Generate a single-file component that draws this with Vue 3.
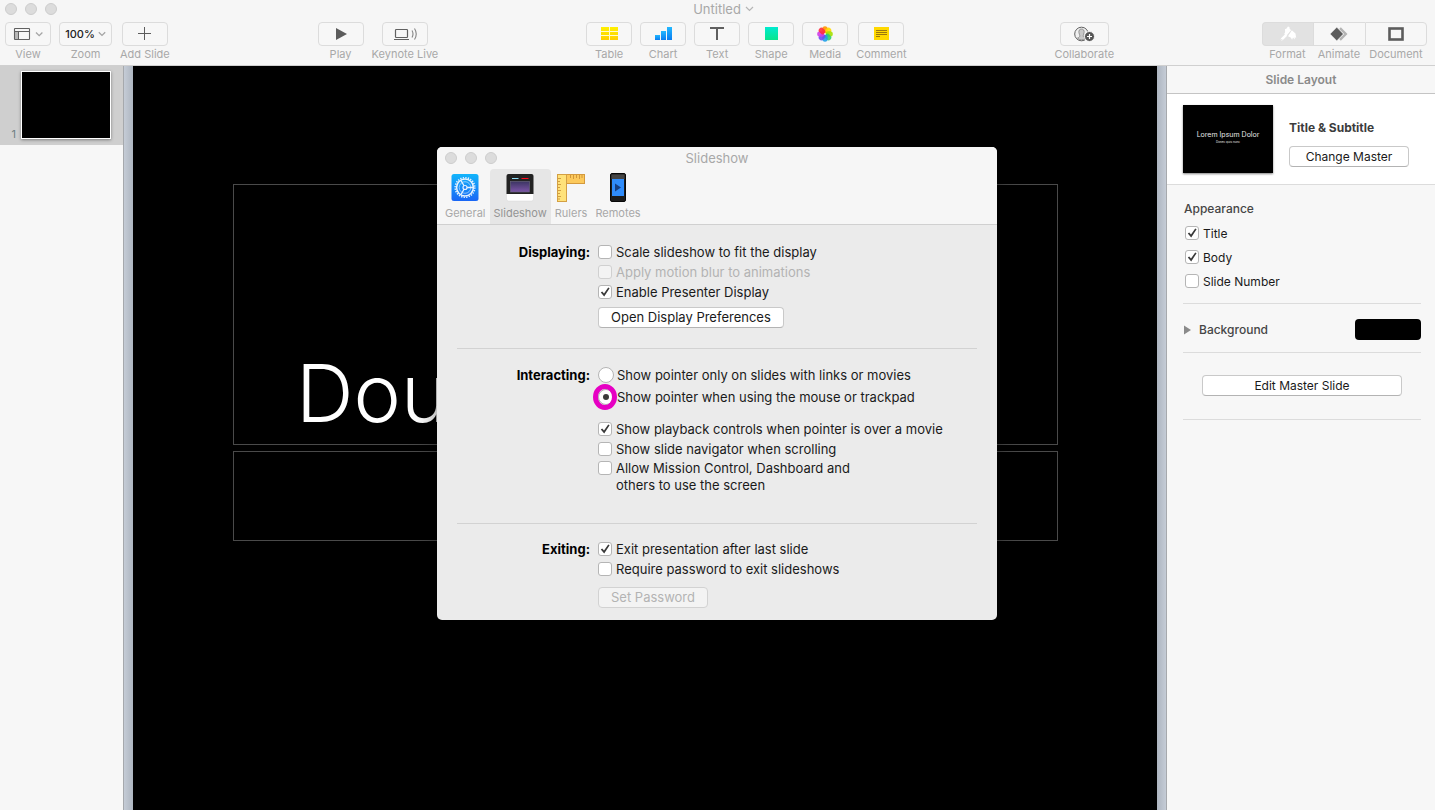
<script setup>
import { ref, reactive } from 'vue';

const activeTab = ref('slideshow');
const activePanel = ref('format');
const pointerMode = ref('mouse');

const insertTools = [
    { id: 'table', label: 'Table' },
    { id: 'chart', label: 'Chart' },
    { id: 'text', label: 'Text' },
    { id: 'shape', label: 'Shape' },
    { id: 'media', label: 'Media' },
    { id: 'comment', label: 'Comment' }
];

const petals = [
    { angle: 0, color: '#ff9500' },
    { angle: 45, color: '#ffd900' },
    { angle: 90, color: '#a5e000' },
    { angle: 135, color: '#2fcf6f' },
    { angle: 180, color: '#1f9fe8' },
    { angle: 225, color: '#6a4cf0' },
    { angle: 270, color: '#d03be8' },
    { angle: 315, color: '#ff2d3f' }
];

const panels = [
    { id: 'format', label: 'Format' },
    { id: 'animate', label: 'Animate' },
    { id: 'document', label: 'Document' }
];

const tabs = [
    { id: 'general', label: 'General' },
    { id: 'slideshow', label: 'Slideshow' },
    { id: 'rulers', label: 'Rulers' },
    { id: 'remotes', label: 'Remotes' }
];

const displaying = reactive([
    { label: 'Scale slideshow to fit the display', checked: false },
    { label: 'Apply motion blur to animations', checked: false, disabled: true },
    { label: 'Enable Presenter Display', checked: true }
]);

const pointerOptions = [
    { value: 'links', label: 'Show pointer only on slides with links or movies' },
    { value: 'mouse', label: 'Show pointer when using the mouse or trackpad', highlight: true }
];

const interacting = reactive([
    { label: 'Show playback controls when pointer is over a movie', checked: true },
    { label: 'Show slide navigator when scrolling', checked: false },
    { label: 'Allow Mission Control, Dashboard and others to use the screen', checked: false, wrap: true }
]);

const exiting = reactive([
    { label: 'Exit presentation after last slide', checked: true },
    { label: 'Require password to exit slideshows', checked: false }
]);

const appearance = reactive([
    { label: 'Title', checked: true },
    { label: 'Body', checked: true },
    { label: 'Slide Number', checked: false }
]);
</script>

<template>
    <div class="app">
        <header class="toolbar">
            <div class="titlebar document-title">
                <div class="lights"><span></span><span></span><span></span></div>
                <span>Untitled</span>
                <svg width="9" height="6" viewBox="0 0 9 6"><path d="M1 1l3.500 3.500 3.500-3.500" fill="none" stroke="#b5b5b5" stroke-width="1.200" /></svg>
            </div>
            <nav class="tools">
                <div class="group">
                    <div class="tool">
                        <button class="tool-btn" aria-label="View">
                            <svg width="30" height="14" viewBox="0 0 30 14">
                                <path d="M2 5h3v7h-3z" fill="#b9b9b9" />
                                <rect x="1.500" y="1.500" width="15" height="11" rx="0.500" fill="none" stroke="#616161" stroke-width="1.100" />
                                <path d="M2 4.500h14M5.500 5v7" fill="none" stroke="#616161" />
                                <path d="M23 5.500l3.200 3.200 3.200-3.200" fill="none" stroke="#a5a5a5" stroke-width="1.300" />
                            </svg>
                        </button>
                        <span>View</span>
                    </div>
                    <div class="tool">
                        <button class="tool-btn zoom" aria-label="Zoom">
                            100%
                            <svg width="8" height="6" viewBox="0 0 8 6"><path d="M0.800 1.200l3.200 3.200 3.200-3.200" fill="none" stroke="#a5a5a5" stroke-width="1.300" /></svg>
                        </button>
                        <span>Zoom</span>
                    </div>
                    <div class="tool">
                        <button class="tool-btn" aria-label="Add Slide">
                            <svg width="14" height="14" viewBox="0 0 14 14"><path d="M6.500 0v13M0 6.500h13" stroke="#5c5c5c" fill="none" /></svg>
                        </button>
                        <span>Add Slide</span>
                    </div>
                </div>

                <div class="group">
                    <div class="tool">
                        <button class="tool-btn" aria-label="Play">
                            <svg width="12" height="12" viewBox="0 0 12 12"><path d="M1 0l11 6-11 6z" fill="#5c5c5c" /></svg>
                        </button>
                        <span>Play</span>
                    </div>
                    <div class="tool">
                        <button class="tool-btn" aria-label="Keynote Live">
                            <svg width="24" height="14" viewBox="0 0 24 14">
                                <rect x="2.500" y="2.500" width="12" height="8" rx="0.800" fill="none" stroke="#616161" stroke-width="1.200" />
                                <path d="M1 12.500h15" stroke="#616161" fill="none" />
                                <path d="M19 3.500q2 3.500 0 7M21.500 1.500q3.500 5.500 0 11" fill="none" stroke="#858585" stroke-width="1.100" />
                            </svg>
                        </button>
                        <span>Keynote Live</span>
                    </div>
                </div>

                <div class="group">
                    <div v-for="tool in insertTools" :key="tool.id" class="tool">
                        <button class="tool-btn" :aria-label="tool.label">
                            <svg v-if="tool.id === 'table'" width="18" height="14" viewBox="0 0 18 14">
                                <defs><linearGradient id="yellow" x2="0" y2="1"><stop stop-color="#fff000" /><stop offset="1" stop-color="#ffcf00" /></linearGradient></defs>
                                <rect x="1" width="17" height="13" fill="url(#yellow)" />
                                <path d="M1 4.500h17M1 8.500h17M9.500 0v13" stroke="#fffbd0" fill="none" />
                            </svg>
                            <svg v-else-if="tool.id === 'chart'" width="18" height="14" viewBox="0 0 18 14">
                                <defs><linearGradient id="blue" x2="0" y2="1"><stop stop-color="#22b8ff" /><stop offset="1" stop-color="#0a7cf0" /></linearGradient></defs>
                                <rect x="1" y="8" width="5" height="5" fill="url(#blue)" />
                                <rect x="7" y="4" width="5" height="9" fill="url(#blue)" />
                                <rect x="13" width="5" height="13" fill="url(#blue)" />
                            </svg>
                            <svg v-else-if="tool.id === 'text'" width="14" height="14" viewBox="0 0 14 14">
                                <path d="M0 1h14M7 1v12" stroke="#5f5f5f" stroke-width="2" fill="none" />
                            </svg>
                            <svg v-else-if="tool.id === 'shape'" width="14" height="14" viewBox="0 0 14 14">
                                <defs><linearGradient id="green" x2="0" y2="1"><stop stop-color="#00ead0" /><stop offset="1" stop-color="#08e58c" /></linearGradient></defs>
                                <rect x="1" width="13" height="13" fill="url(#green)" />
                            </svg>
                            <svg v-else-if="tool.id === 'media'" width="16" height="16" viewBox="0 0 16 16">
                                <rect
                                    v-for="petal in petals"
                                    :key="petal.angle"
                                    x="5.300"
                                    y="0.200"
                                    width="5.400"
                                    height="7.200"
                                    rx="2.700"
                                    :fill="petal.color"
                                    fill-opacity="0.900"
                                    :transform="`rotate(${petal.angle} 8 8)`"
                                />
                                <circle cx="8" cy="8" r="0.800" fill="#fff" />
                            </svg>
                            <svg v-else width="16" height="14" viewBox="0 0 16 14">
                                <rect x="1" width="15" height="13" fill="#ffd800" />
                                <path d="M3 3.500h11M3 5.500h11M3 7.500h11M3 9.500h4" stroke="#8f6c10" stroke-width="0.900" fill="none" />
                            </svg>
                        </button>
                        <span>{{ tool.label }}</span>
                    </div>
                </div>

                <div class="group">
                    <div class="tool">
                        <button class="tool-btn wide" aria-label="Collaborate">
                            <svg width="21" height="16" viewBox="0 0 21 16">
                                <circle cx="7.500" cy="8" r="6.800" fill="#f0f0f0" stroke="#616161" />
                                <path d="M7.500 3c-2.200 0-2.900 1.700-2.600 3.600.1 1.300.9 2 .9 3.200 0 1.300-1 1.700-2.300 2.300q4 3.700 8 0c-1.300-.6-2.300-1-2.300-2.300 0-1.200.8-1.900.9-3.200.3-1.900-.4-3.600-2.600-3.600z" fill="#c9c9c9" stroke="#777" stroke-width="0.700" />
                                <circle cx="15.500" cy="10.500" r="5" fill="#555" stroke="#f7f7f7" />
                                <path d="M15.500 8v5M13 10.500h5" stroke="#fff" stroke-width="1.200" fill="none" />
                            </svg>
                        </button>
                        <span>Collaborate</span>
                    </div>
                </div>

                <div class="segments">
                    <div v-for="panel in panels" :key="panel.id" class="tool segment">
                        <button
                            class="tool-btn"
                            :class="{ active: activePanel === panel.id }"
                            :aria-label="panel.label"
                            @click="activePanel = panel.id"
                        >
                            <svg v-if="panel.id === 'format'" width="18" height="16" viewBox="0 0 18 16">
                                <path d="M6 3.200l1.600-.6 1.300-2.200 1.500.6.400 2.300 1.500.700-4.800 5.800-2.300-1.800.9-1.700z" fill="#fff" />
                                <path d="M12.800 4.300l3.700 3.200.7 4.800-1.400-1.200-.1 2.400-1.700-2-.9 2.300-1.400-2.400-2.700-1.100z" fill="#fff" />
                                <path d="M6.800 9.300l-3.800 3.900" stroke="#fff" stroke-width="2.600" stroke-linecap="round" fill="none" />
                                <circle cx="2.800" cy="13.500" r="0.600" fill="#dcdcdc" />
                                <path d="M12.500 4.200l-4.600 5.800" stroke="#e2e2e2" stroke-width="0.600" fill="none" />
                            </svg>
                            <svg v-else-if="panel.id === 'animate'" width="18" height="14" viewBox="0 0 18 14">
                                <path d="M10 1.200l5.800 5.800-5.800 5.800" stroke="#b4b4b4" stroke-width="2.400" fill="none" />
                                <path d="M6.800 0.300l6.500 6.700-6.500 6.700-6.600-6.700z" fill="#5c5c5c" stroke="#f7f7f7" stroke-width="0.400" />
                            </svg>
                            <svg v-else width="16" height="14" viewBox="0 0 16 14">
                                <rect x="1.500" y="1.500" width="13" height="11" fill="none" stroke="#5c5c5c" stroke-width="2.600" />
                            </svg>
                        </button>
                        <span>{{ panel.label }}</span>
                    </div>
                </div>
            </nav>
        </header>

        <main class="workspace">
            <aside class="navigator">
                <div class="slide-row">
                    <span>1</span>
                    <div class="slide-thumb"></div>
                </div>
            </aside>
            <div class="gutter left"></div>
            <section class="slide">
                <div class="slide-title">Dou</div>
                <div class="slide-body"></div>
            </section>
            <div class="gutter right"></div>

            <aside class="inspector">
                <h2>Slide Layout</h2>
                <div class="master">
                    <div class="master-thumb">
                        <span class="lorem">Lorem Ipsum Dolor</span>
                        <span class="donec">Donec quis nunc</span>
                    </div>
                    <div class="master-info">
                        <strong>Title &amp; Subtitle</strong>
                        <button class="push">Change Master</button>
                    </div>
                </div>
                <div class="options">
                    <div class="block appearance">
                        <h3>Appearance</h3>
                        <label v-for="item in appearance" :key="item.label" class="check">
                            <input v-model="item.checked" type="checkbox" />
                            <span>{{ item.label }}</span>
                        </label>
                    </div>
                    <div class="block background">
                        <svg width="8" height="10" viewBox="0 0 8 10"><path d="M1 0.500l7 4.500-7 4.500z" fill="#8a8a8a" /></svg>
                        <h3>Background</h3>
                        <button class="swatch" aria-label="Background color"></button>
                    </div>
                    <div class="block edit">
                        <button class="push">Edit Master Slide</button>
                    </div>
                </div>
            </aside>
        </main>

        <div class="overlay">
            <div class="dialog" role="dialog" aria-label="Slideshow">
                <div class="dialog-head">
                    <div class="titlebar">
                        <div class="lights"><span></span><span></span><span></span></div>
                        <span>Slideshow</span>
                    </div>
                    <div class="tabs">
                        <button
                            v-for="tab in tabs"
                            :key="tab.id"
                            class="tab"
                            :class="{ active: activeTab === tab.id }"
                            @click="activeTab = tab.id"
                        >
                            <svg v-if="tab.id === 'general'" width="30" height="30" viewBox="0 0 30 30">
                                <defs><linearGradient id="general" x2="0" y2="1"><stop stop-color="#12b5fb" /><stop offset="1" stop-color="#1a66f5" /></linearGradient></defs>
                                <rect x="1.500" y="1" width="27" height="27" rx="2.500" fill="url(#general)" />
                                <circle cx="15" cy="14.500" r="9.800" fill="none" stroke="#e6f2ff" stroke-width="1.600" stroke-dasharray="1.300 1.265" />
                                <circle cx="15" cy="14.500" r="8.400" fill="none" stroke="#e6f2ff" stroke-width="1.500" />
                                <circle cx="15" cy="14.500" r="5.800" fill="none" stroke="#bfe0ff" stroke-width="0.700" />
                                <path d="M15 14.500h8M15 14.500l-4-7M15 14.500l-4 7" stroke="#e6f2ff" stroke-width="1.300" fill="none" />
                                <circle cx="15" cy="14.500" r="2" fill="#1a83f8" stroke="#e6f2ff" stroke-width="1.200" />
                            </svg>
                            <svg v-else-if="tab.id === 'slideshow'" width="30" height="30" viewBox="0 0 30 30">
                                <defs><linearGradient id="stage" x2="0" y2="1"><stop stop-color="#3c3563" /><stop offset="1" stop-color="#7d55a8" /></linearGradient></defs>
                                <path d="M1.500 20h27v6q0 2-2 2h-23q-2 0-2-2z" fill="#fff" stroke="#d6d6d6" stroke-width="0.500" />
                                <path d="M1.500 21v-18q0-2 2-2h23q2 0 2 2v18z" fill="#222" />
                                <path d="M7 5.500h6.500" stroke="#8fdcf4" />
                                <path d="M16.500 5.500h7" stroke="#ff0a1c" />
                                <rect x="5.500" y="8.500" width="19" height="10.500" fill="url(#stage)" stroke="#66617c" stroke-width="0.700" />
                            </svg>
                            <svg v-else-if="tab.id === 'rulers'" width="30" height="30" viewBox="0 0 30 30">
                                <rect x="10.500" y="1.500" width="18" height="9" fill="#fcc95c" stroke="#d49a3d" />
                                <rect x="1.500" y="1.500" width="9" height="27" fill="#ffe27a" stroke="#d4a044" />
                                <path d="M14.500 2v3M17.500 2v4M20.500 2v3M23.500 2v4M26 2v3" stroke="#c58a32" stroke-width="0.800" fill="none" />
                                <path d="M2 5.500h3M2 8.500h2M2 11.500h3M2 14.500h2M2 17.500h3M2 20.500h2M2 23.500h3M2 26h2" stroke="#c58a32" stroke-width="0.800" fill="none" />
                            </svg>
                            <svg v-else width="30" height="30" viewBox="0 0 30 30">
                                <rect x="7.500" y="0.500" width="15" height="28" rx="1.500" fill="#1c1c1c" stroke="#080808" />
                                <path d="M8.500 1.500h13v4.500h-13z" fill="#444" />
                                <rect x="9" y="6" width="12" height="17" fill="#2f8cfb" />
                                <path d="M12 10.500l6 4-6 4z" fill="#163f82" />
                            </svg>
                            <span>{{ tab.label }}</span>
                        </button>
                    </div>
                </div>

                <fieldset class="section displaying">
                    <legend>Displaying:</legend>
                    <div class="controls">
                        <label v-for="item in displaying" :key="item.label" class="check" :class="{ disabled: item.disabled }">
                            <input v-model="item.checked" type="checkbox" :disabled="item.disabled" />
                            <span>{{ item.label }}</span>
                        </label>
                        <button class="push">Open Display Preferences</button>
                    </div>
                </fieldset>

                <fieldset class="section interacting">
                    <legend>Interacting:</legend>
                    <div class="controls">
                        <div class="radios">
                            <label v-for="option in pointerOptions" :key="option.value" class="radio" :class="{ highlight: option.highlight }">
                                <input v-model="pointerMode" type="radio" name="pointer" :value="option.value" />
                                <span>{{ option.label }}</span>
                            </label>
                        </div>
                        <label v-for="item in interacting" :key="item.label" class="check" :class="{ wrap: item.wrap }">
                            <input v-model="item.checked" type="checkbox" />
                            <span>{{ item.label }}</span>
                        </label>
                    </div>
                </fieldset>

                <fieldset class="section exiting">
                    <legend>Exiting:</legend>
                    <div class="controls">
                        <label v-for="item in exiting" :key="item.label" class="check">
                            <input v-model="item.checked" type="checkbox" />
                            <span>{{ item.label }}</span>
                        </label>
                        <button class="push" disabled>Set Password</button>
                    </div>
                </fieldset>
            </div>
        </div>
    </div>
</template>

<style>
html,
body,
#app {
    height: 100%;
    margin: 0;
}
</style>

<style scoped>
* {
    box-sizing: border-box;
}

.app {
    position: relative;
    display: flex;
    flex-direction: column;
    min-height: 100%;
    font-family: Inter, Roboto, sans-serif;
    font-size: 13px;
    color: #1a1a1a;
    background: #f7f7f7;
}

button {
    font-family: inherit;
    margin: 0;
}

svg {
    display: block;
    flex: none;
}

/* toolbar */
.toolbar {
    height: 66px;
    background: #f6f6f6;
    border-bottom: 1px solid #d0d0d0;
}

.titlebar {
    position: relative;
    display: flex;
    align-items: center;
    justify-content: center;
    gap: 4px;
    height: 18px;
    color: #a8a8a8;
    font-size: 13px;
}

.document-title {
    padding-left: 12px;
}

.lights {
    position: absolute;
    left: 5px;
    top: 3px;
    display: flex;
    gap: 8px;
}

.lights span {
    width: 12px;
    height: 12px;
    border-radius: 50%;
    background: #dcdcdc;
    border: 1px solid #cdcdcd;
}

.tools {
    display: flex;
    justify-content: space-between;
    padding: 4px 8px 0 5px;
}

.group {
    display: flex;
    gap: 8px;
}

.tool {
    display: flex;
    flex-direction: column;
    align-items: center;
    font-size: 11px;
    line-height: 16px;
    color: #a8a8a8;
}

.tool-btn {
    display: flex;
    align-items: center;
    justify-content: center;
    width: 46px;
    height: 24px;
    padding: 0;
    background: #f7f7f7;
    border: 1px solid #dcdcdc;
    border-radius: 4px;
}

.tool-btn.zoom {
    width: 53px;
    gap: 3px;
    font-size: 11px;
    font-weight: 500;
    color: #222;
}

.tool-btn.wide {
    width: 49px;
}

.segments {
    display: flex;
}

.segment .tool-btn {
    width: 52px;
    border-right: none;
    border-radius: 0;
}

.segment:first-child .tool-btn {
    width: 51px;
    border-radius: 4px 0 0 4px;
}

.segment:last-child .tool-btn {
    width: 62px;
    border-right: 1px solid #dcdcdc;
    border-radius: 0 4px 4px 0;
}

.segment .tool-btn.active {
    background: #e2e2e2;
}

/* workspace */
.workspace {
    display: flex;
    flex: 1;
}

.navigator {
    width: 123px;
    background: #f7f7f7;
}

.slide-row {
    display: flex;
    align-items: flex-end;
    justify-content: flex-end;
    gap: 5px;
    padding: 5px 12px 6px 0;
    background: #cfcfcf;
    font-size: 11px;
    line-height: 10px;
    color: #6f7f82;
}

.slide-thumb {
    width: 90px;
    height: 68px;
    background: #000;
    border: 1px solid #fff;
    box-shadow: 0 1px 3px rgba(0, 0, 0, 0.4);
}

.gutter {
    width: 10px;
}

.gutter.left {
    border-left: 1px solid #a6a9ad;
    background: linear-gradient(to right, #c5ccd6, #adb5c0);
}

.gutter.right {
    border-right: 1px solid #a6a9ad;
    background: linear-gradient(to right, #adb5c0, #c5ccd6);
}

.slide {
    flex: 1;
    display: flex;
    flex-direction: column;
    gap: 6px;
    padding: 118px 99px 0 100px;
    background: #000;
}

.slide-title {
    display: flex;
    align-items: flex-end;
    height: 261px;
    padding: 0 62px 1px;
    border: 1px solid #4a4a4a;
    color: #fff;
    font-size: 80px;
    font-weight: 300;
    line-height: 100px;
}

.slide-body {
    height: 90px;
    border: 1px solid #4a4a4a;
}

/* inspector */
.inspector {
    width: 268px;
    background: #f7f7f7;
}

.inspector h2 {
    margin: 0;
    height: 28px;
    border-bottom: 1px solid #c4c4c4;
    font-size: 12px;
    font-weight: 600;
    line-height: 27px;
    text-align: center;
    color: #8a8a8a;
}

.inspector h3 {
    margin: 0;
    font-size: 12px;
    font-weight: 500;
    line-height: 20px;
    color: #454545;
}

.master {
    display: flex;
    gap: 16px;
    padding: 11px 16px;
    background: #fff;
    border-bottom: 1px solid #dcdcdc;
}

.master-thumb {
    display: flex;
    flex-direction: column;
    align-items: center;
    width: 90px;
    height: 68px;
    padding-top: 25px;
    background: #000;
    box-shadow: 0 1px 2px rgba(0, 0, 0, 0.5);
    color: #e8e8e8;
    white-space: nowrap;
}

.lorem {
    font-size: 7px;
    line-height: 10px;
}

.donec {
    font-size: 3px;
    line-height: 4px;
}

.master-info {
    display: flex;
    flex-direction: column;
    gap: 8px;
    padding-top: 13px;
}

.master-info strong {
    font-size: 12px;
    font-weight: 700;
    line-height: 20px;
    color: #3c3c3c;
}

.master-info .push {
    width: 120px;
}

.inspector .push {
    font-size: 12px;
}

.options {
    padding: 0 14px 0 16px;
}

.block {
    border-bottom: 1px solid #dcdcdc;
}

.appearance {
    padding: 14px 0 10px 1px;
}

.appearance h3 {
    margin-bottom: 2px;
}

.appearance .check {
    height: 24px;
    padding-left: 1px;
    font-size: 12px;
}

.background {
    display: flex;
    align-items: center;
    gap: 8px;
    height: 49px;
    padding-top: 3px;
}

.swatch {
    width: 66px;
    height: 21px;
    margin-left: auto;
    border: none;
    border-radius: 4px;
    background: #000;
}

.edit {
    padding: 22px 19px 23px;
}

.edit .push {
    width: 100%;
}

/* form controls */
.push {
    height: 21px;
    padding: 0 12px;
    background: #fff;
    border: 1px solid #c9c9c9;
    border-bottom-color: #b3b3b3;
    border-radius: 4px;
    font-size: 13px;
    line-height: 19px;
    color: #1a1a1a;
    white-space: nowrap;
}

.push:disabled {
    background: #f3f3f3;
    border-color: #d2d2d2;
    color: #b3b3b3;
}

.check,
.radio {
    display: flex;
    align-items: center;
    gap: 4px;
    height: 20px;
}

input {
    appearance: none;
    flex: none;
    display: grid;
    place-items: center;
    margin: 0;
    background: #fff;
    border: 1px solid #b5b5b5;
}

input[type='checkbox'] {
    width: 14px;
    height: 14px;
    border-radius: 3px;
}

input[type='checkbox']:checked::before {
    content: '';
    width: 10px;
    height: 10px;
    background: #3a3a3a;
    clip-path: polygon(8% 54%, 22% 44%, 40% 66%, 82% 4%, 96% 12%, 42% 94%);
}

input[type='radio'] {
    width: 16px;
    height: 16px;
    border-radius: 50%;
}

input[type='radio']:checked::before {
    content: '';
    width: 6px;
    height: 6px;
    border-radius: 50%;
    background: #3a3a3a;
}

.disabled {
    color: #b3b3b3;
}

.disabled input {
    background: #f3f3f3;
    border-color: #d0d0d0;
}

/* preferences dialog */
.overlay {
    position: absolute;
    inset: 0;
    display: flex;
    align-items: flex-start;
    justify-content: center;
    padding: 147px 1px 0 0;
}

.dialog {
    width: 560px;
    overflow: hidden;
    border-radius: 5px;
    background: #ebebeb;
    box-shadow: 0 8px 24px rgba(0, 0, 0, 0.5);
}

.dialog-head {
    background: #f6f6f6;
    border-bottom: 1px solid #d0d0d0;
}

.dialog .titlebar {
    height: 22px;
}

.dialog .lights {
    left: 8px;
    top: 5px;
}

.tabs {
    display: flex;
    padding-left: 4px;
}

.tab {
    display: flex;
    flex-direction: column;
    align-items: center;
    gap: 3px;
    height: 55px;
    padding: 4px 4px 0;
    background: none;
    border: none;
    border-radius: 4px 4px 0 0;
    font-size: 11px;
    line-height: 14px;
    color: #a8a8a8;
}

.tab.active {
    background: #e6e6e6;
    color: #949494;
}

.section {
    display: flex;
    gap: 8px;
    min-width: 0;
    margin: 0 20px;
    padding: 15px 0 0;
    border: none;
    border-bottom: 1px solid #d2d2d2;
}

.section legend {
    float: left;
    width: 133px;
    padding: 0;
    font-weight: 700;
    line-height: 20px;
    text-align: right;
    color: #000;
}

.controls {
    display: flex;
    flex-direction: column;
    align-items: flex-start;
}

.displaying {
    padding: 17px 0 20px;
}

.displaying .push {
    margin-top: 5px;
}

.interacting {
    padding-bottom: 29px;
}

.interacting legend {
    line-height: 22px;
}

.radios {
    margin-bottom: 11px;
}

.radio {
    position: relative;
    gap: 3px;
    height: 22px;
}

.highlight::after {
    content: '';
    position: absolute;
    box-sizing: border-box;
    left: -5px;
    top: -2px;
    width: 24px;
    height: 26px;
    border: 5px solid #e600c3;
    border-radius: 50%;
}

.check.wrap {
    align-items: flex-start;
    height: auto;
    width: 260px;
    padding-top: 1px;
    line-height: 17px;
}

.check.wrap input {
    margin-top: 1px;
}

.exiting {
    padding-bottom: 12px;
    border-bottom: none;
}

.exiting .push {
    margin-top: 8px;
}
</style>
